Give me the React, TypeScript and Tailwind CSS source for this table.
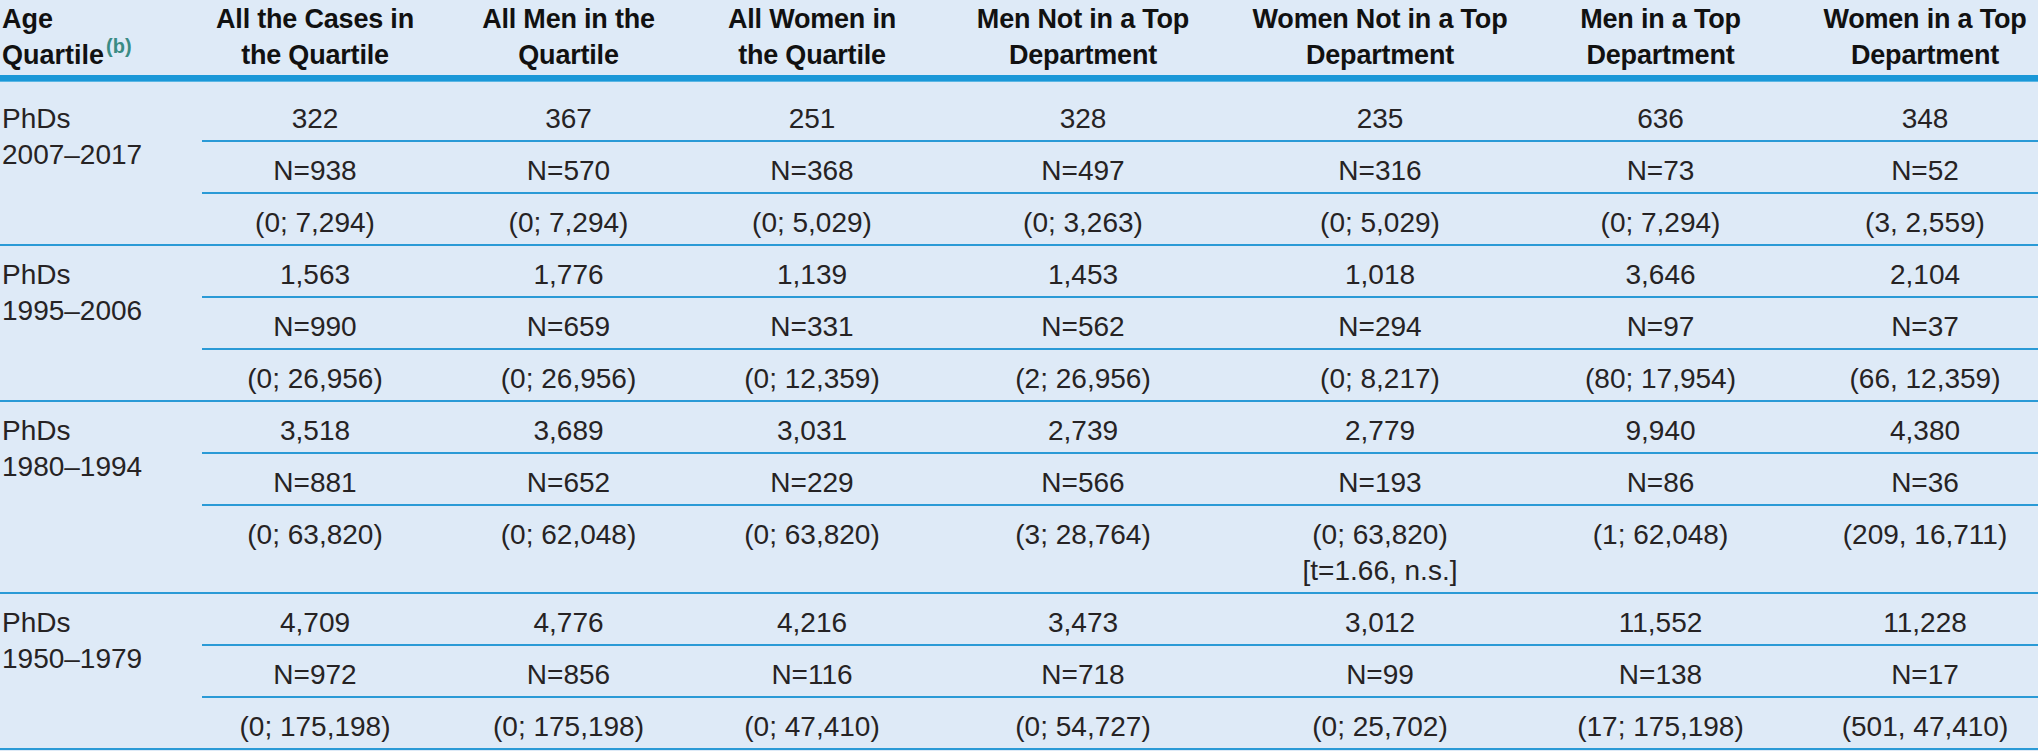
import React from "react";

const headers = [
  ["All the Cases in", "the Quartile"],
  ["All Men in the", "Quartile"],
  ["All Women in", "the Quartile"],
  ["Men Not in a Top", "Department"],
  ["Women Not in a Top", "Department"],
  ["Men in a Top", "Department"],
  ["Women in a Top", "Department"],
];

const groups = [
  {
    label: ["PhDs", "2007–2017"],
    rows: [
      ["322", "367", "251", "328", "235", "636", "348"],
      ["N=938", "N=570", "N=368", "N=497", "N=316", "N=73", "N=52"],
      ["(0; 7,294)", "(0; 7,294)", "(0; 5,029)", "(0; 3,263)", "(0; 5,029)", "(0; 7,294)", "(3, 2,559)"],
    ],
  },
  {
    label: ["PhDs", "1995–2006"],
    rows: [
      ["1,563", "1,776", "1,139", "1,453", "1,018", "3,646", "2,104"],
      ["N=990", "N=659", "N=331", "N=562", "N=294", "N=97", "N=37"],
      ["(0; 26,956)", "(0; 26,956)", "(0; 12,359)", "(2; 26,956)", "(0; 8,217)", "(80; 17,954)", "(66, 12,359)"],
    ],
  },
  {
    label: ["PhDs", "1980–1994"],
    rows: [
      ["3,518", "3,689", "3,031", "2,739", "2,779", "9,940", "4,380"],
      ["N=881", "N=652", "N=229", "N=566", "N=193", "N=86", "N=36"],
      ["(0; 63,820)", "(0; 62,048)", "(0; 63,820)", "(3; 28,764)", "(0; 63,820)|[t=1.66, n.s.]", "(1; 62,048)", "(209, 16,711)"],
    ],
  },
  {
    label: ["PhDs", "1950–1979"],
    rows: [
      ["4,709", "4,776", "4,216", "3,473", "3,012", "11,552", "11,228"],
      ["N=972", "N=856", "N=116", "N=718", "N=99", "N=138", "N=17"],
      ["(0; 175,198)", "(0; 175,198)", "(0; 47,410)", "(0; 54,727)", "(0; 25,702)", "(17; 175,198)", "(501, 47,410)"],
    ],
  },
];

export default function App() {
  return (
    <div className="w-[2038px] h-[751px] overflow-hidden bg-[#deeaf7] text-[#262324] font-['Liberation_Sans',Arial,sans-serif]">
      {/* Header */}
      <div className="grid grid-cols-[202px_226px_281px_206px_336px_258px_303px_226px] h-[75px] text-[27px] leading-[36px] font-bold text-[#111]">
        <div className="pl-[2px] pt-[1px] text-left whitespace-nowrap">
          Age
          <br />
          Quartile
          <sup className="text-[20px] text-[#3a8c84] ml-[2px] top-[-0.55em]">(b)</sup>
        </div>
        {headers.map((h, i) => (
          <div key={i} className="pt-[1px] text-center whitespace-nowrap tracking-[-0.2px]">
            {h[0]}
            <br />
            {h[1]}
          </div>
        ))}
      </div>
      <div className="h-[7px] bg-[#1a98d8] border-b border-[#5ab6e4]" />

      {/* Body */}
      {groups.map((g, gi) => (
        <div key={gi} className="flex border-b-2 border-[#2a9ad6] text-[28px] leading-[36px]">
          <div className={`w-[202px] shrink-0 pl-[2px] ${gi === 0 ? "pt-[19px]" : "pt-[11px]"}`}>
            {g.label[0]}
            <br />
            {g.label[1]}
          </div>
          <div className="flex-1 flex flex-col">
            {g.rows.map((r, ri) => (
              <div
                key={ri}
                className={`grid grid-cols-[226px_281px_206px_336px_258px_303px_226px] pb-[3px] ${
                  gi === 0 && ri === 0 ? "pt-[19px]" : "pt-[11px]"
                } ${ri < 2 ? "border-b-2 border-[#2a9ad6]" : ""}`}
              >
                {r.map((c, ci) => (
                  <div key={ci} className="text-center whitespace-nowrap">
                    {c.split("|").map((line, li) => (
                      <div key={li}>{line}</div>
                    ))}
                  </div>
                ))}
              </div>
            ))}
          </div>
        </div>
      ))}
    </div>
  );
}
